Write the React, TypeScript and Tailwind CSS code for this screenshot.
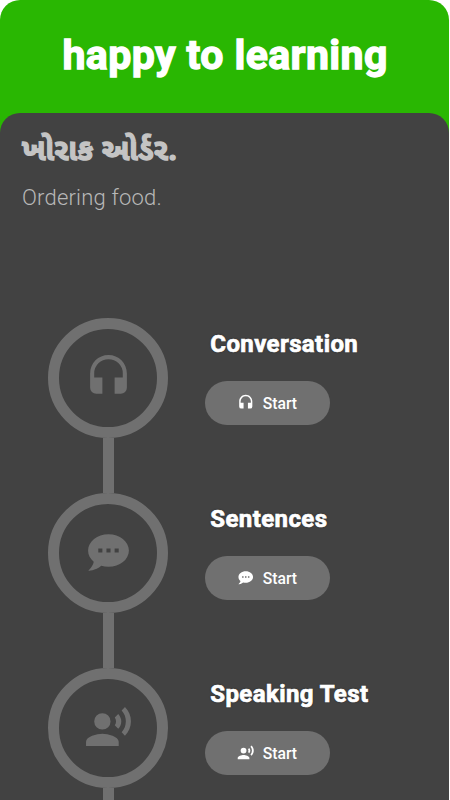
import React from 'react';

const steps = [
  {
    title: 'Conversation',
    path: 'M12 1C7 1 3 5 3 10v7a3 3 0 0 0 3 3h3v-8H5v-2a7 7 0 0 1 14 0v2h-4v8h3a3 3 0 0 0 3-3v-7c0-5-4.03-9-9-9z',
  },
  {
    title: 'Sentences',
    path: 'M12 3c5.5 0 10 3.58 10 8s-4.5 8-10 8c-1.24 0-2.43-.18-3.53-.5C5.55 21 2 21 2 21c2.33-2.33 2.7-3.9 2.75-4.5C3.05 15.07 2 13.13 2 11c0-4.42 4.5-8 10-8m5 9v-2h-2v2h2m-4 0v-2h-2v2h2m-4 0v-2H7v2h2z',
  },
  {
    title: 'Speaking Test',
    path: 'M9 5a4 4 0 0 1 4 4 4 4 0 0 1-4 4 4 4 0 0 1-4-4 4 4 0 0 1 4-4m0 10c2.67 0 8 1.34 8 4v2H1v-2c0-2.66 5.33-4 8-4m7.76-9.64c2.02 2.2 2.02 5.25 0 7.27l-1.68-1.69c.84-1.18.84-2.71 0-3.89l1.68-1.69M20.07 2c3.93 4.05 3.9 10.11 0 14l-1.63-1.63c2.77-3.18 2.77-7.72 0-10.74L20.07 2z',
  },
];

function Icon({ path, className }: { path: string; className: string }) {
  return (
    <svg viewBox="0 0 24 24" fill="currentColor" className={className}>
      <path d={path} />
    </svg>
  );
}

export default function App() {
  return (
    <div className="h-[800px] w-[450px] overflow-hidden bg-white font-['Roboto',sans-serif]">
      <div className="h-full w-[449.3px] rounded-t-[20px] bg-[linear-gradient(#29b702_0_135px,#424242_135px)]">
        <header className="flex h-[113px] items-center justify-center pb-[3px]">
          <h1 className="ml-px text-[41px] leading-none font-bold tracking-[0.4px] whitespace-nowrap text-white [-webkit-text-stroke:1.3px_white]">happy to learning</h1>
        </header>
        <main className="h-[687px] overflow-hidden rounded-t-[20px] bg-[#424242]">
          <div className="h-[205px] px-[22px] pt-[20px]">
            <h2 className="h-[37px] font-['Noto_Sans_Gujarati','Lohit_Gujarati','Roboto',sans-serif] text-[29px] leading-[40px] font-bold tracking-[0.6px] text-[#c4c4c4] [-webkit-text-stroke:1.4px_#c4c4c4]">ખોરાક ઓર્ડર.</h2>
            <p className="mt-[13px] text-[22px] leading-[30px] font-light tracking-[0.2px] text-[#b8b8b8]">Ordering food.</p>
          </div>
          <div className="flex flex-col">
            {steps.map(({ title, path }) => (
              <section key={title} className="flex h-[175px] shrink-0">
                <div className="ml-12 flex w-[120px] shrink-0 flex-col items-center">
                  <div className="flex size-[120px] shrink-0 items-center justify-center rounded-full border-[11px] border-[#707070] pl-px text-[#707070]">
                    <Icon path={path} className="-mt-px size-[49px]" />
                  </div>
                  <div className="h-[55px] w-[11px] bg-[#707070]" />
                </div>
                <div className="ml-[36.7px] pt-[11px]">
                  <h3 className="ml-[5.6px] text-[24px] leading-[30px] font-bold tracking-[0.4px] whitespace-nowrap text-white [-webkit-text-stroke:0.7px_white] [text-shadow:0_0_2px_#222]">{title}</h3>
                  <button className="mt-[22px] flex h-[44px] w-[125px] items-center justify-center gap-[8px] rounded-full bg-[#707070] pt-[2px] text-[15.7px] font-medium text-white">
                    <Icon path={path} className="-mt-0.5 size-[17.5px]" />
                    Start
                  </button>
                </div>
              </section>
            ))}
          </div>
        </main>
      </div>
    </div>
  );
}
